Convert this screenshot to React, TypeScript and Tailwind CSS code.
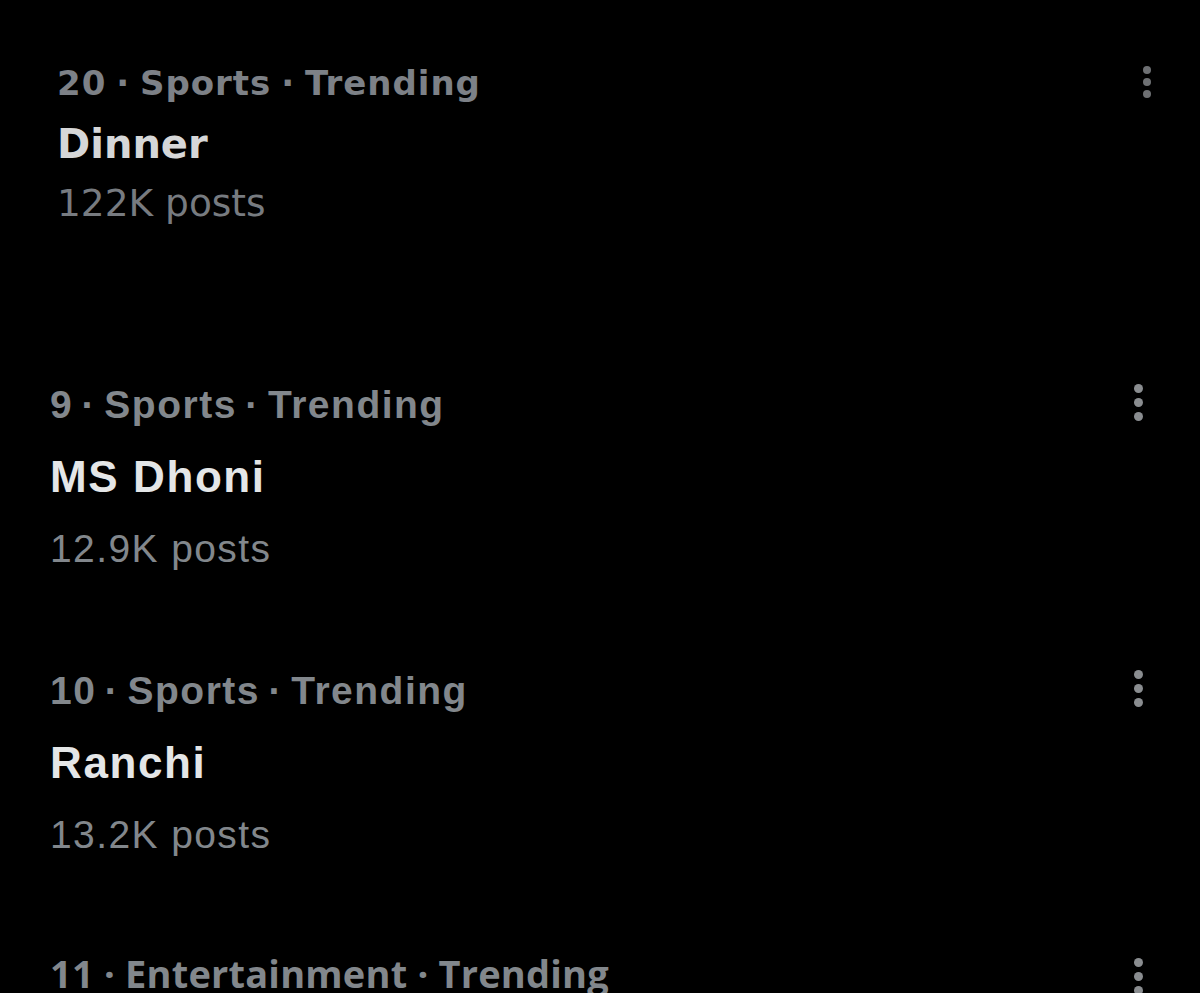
import React from "react";

function Dots({ size, gap, color }: { size: string; gap: string; color: string }) {
  return (
    <div className={`flex flex-col ${gap}`}>
      <span className={`${size} rounded-full ${color}`} />
      <span className={`${size} rounded-full ${color}`} />
      <span className={`${size} rounded-full ${color}`} />
    </div>
  );
}

function Trend({ cat, name, posts }: { cat: string; name: string; posts: string }) {
  return (
    <div className="flex justify-between pl-[50px] pr-[57px]">
      <div className="flex flex-col" style={{ fontFamily: '"Liberation Sans", Arial, sans-serif' }}>
        <div className="h-[48px] text-[39px] leading-[48px] font-bold text-[#82878c] tracking-[1.5px] [word-spacing:-4px] whitespace-nowrap">
          {cat}
        </div>
        <div className="mt-[20px] h-[56px] text-[44px] leading-[56px] font-bold text-[#e4e6e7] tracking-[1.6px]">
          {name}
        </div>
        <div className="mt-[20px] h-[48px] text-[39px] leading-[48px] text-[#82878c] tracking-[1.4px]">
          {posts}
        </div>
      </div>
      <div className="pt-[3px]">
        <Dots size="w-[9px] h-[9px]" gap="gap-[5px]" color="bg-[#8a8d90]" />
      </div>
    </div>
  );
}

export default function App() {
  return (
    <div className="w-[1200px] h-[993px] overflow-hidden bg-black">
      <div className="flex justify-between pt-[63px] pl-[57px] pr-[49px]">
        <div className="flex flex-col" style={{ fontFamily: '"DejaVu Sans", sans-serif' }}>
          <div className="h-[40px] text-[34px] leading-[40px] font-bold text-[#7d8187] whitespace-nowrap tracking-[1px] [word-spacing:-3px]">
            20 · Sports · Trending
          </div>
          <div className="mt-[19px] h-[44px] text-[40px] leading-[44px] font-bold text-[#d6d7d8]">Dinner</div>
          <div className="mt-[15px] h-[44px] text-[37.5px] leading-[44px] text-[#777b80]">122K posts</div>
        </div>
        <div className="pt-[3px]">
          <Dots size="w-[8px] h-[8px]" gap="gap-[4px]" color="bg-[#6e7073]" />
        </div>
      </div>
      <div className="mt-[156px]">
        <Trend cat="9 · Sports · Trending" name="MS Dhoni" posts="12.9K posts" />
      </div>
      <div className="mt-[94px]">
        <Trend cat="10 · Sports · Trending" name="Ranchi" posts="13.2K posts" />
      </div>
      <div className="mt-[90px]">
        <div className="flex justify-between pl-[50px] pr-[57px]">
          <div
            className="h-[48px] text-[38px] leading-[48px] font-bold text-[#82878c] whitespace-nowrap tracking-[0.2px]"
            style={{ fontFamily: '"Open Sans", Lato, sans-serif' }}
          >
            11 · Entertainment · Trending
          </div>
          <div className="pt-[9px]">
            <Dots size="w-[9px] h-[9px]" gap="gap-[5px]" color="bg-[#8a8d90]" />
          </div>
        </div>
      </div>
    </div>
  );
}
